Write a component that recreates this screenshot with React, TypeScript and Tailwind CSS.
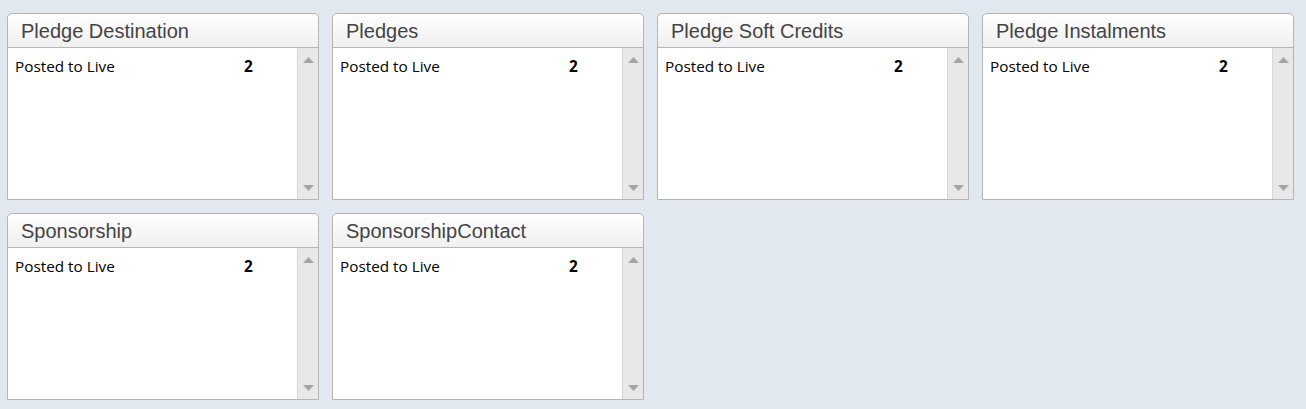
const panels = [
  "Pledge Destination",
  "Pledges",
  "Pledge Soft Credits",
  "Pledge Instalments",
  "Sponsorship",
  "SponsorshipContact",
];

function ScrollTrack() {
  return (
    <div className="flex w-[21px] shrink-0 flex-col items-center justify-between border-l border-[#d6d6d6] bg-[#e8e8e8] pt-[9px] pb-[8px]">
      <svg width="11" height="6" viewBox="0 0 11 6">
        <path d="M5.5 0 L11 6 L0 6 Z" fill="#a6a6a6" />
      </svg>
      <svg width="11" height="6" viewBox="0 0 11 6">
        <path d="M0 0 L11 0 L5.5 6 Z" fill="#a6a6a6" />
      </svg>
    </div>
  );
}

function Panel({ title }: { title: string }) {
  return (
    <section className="flex h-[187px] w-[312px] flex-col rounded-t-[5px] border border-[#b5b5b5] bg-white">
      <header className="flex h-[34px] shrink-0 items-center rounded-t-[5px] border-b border-[#b5b5b5] bg-gradient-to-b from-white to-[#efefef] pl-[13px] font-['Liberation_Sans',Arial,sans-serif] text-[20px] leading-6 text-[#444444]">
        {title}
      </header>
      <div className="flex min-h-0 flex-1">
        <div className="flex-1 pl-[7px] pt-[8px] font-['Open_Sans',sans-serif] text-[15.3px] leading-5 text-black">
          <div className="flex">
            <span className="w-[229px]">Posted to Live</span>
            <span className="font-bold">2</span>
          </div>
        </div>
        <ScrollTrack />
      </div>
    </section>
  );
}

export default function App() {
  return (
    <div className="min-h-[409px] w-full bg-[#e1e8f0] pl-[7px] pt-[13px] pb-[9px]">
      <div className="grid grid-cols-[repeat(4,312px)] gap-[13px]">
        {panels.map((p) => (
          <Panel key={p} title={p} />
        ))}
      </div>
    </div>
  );
}
